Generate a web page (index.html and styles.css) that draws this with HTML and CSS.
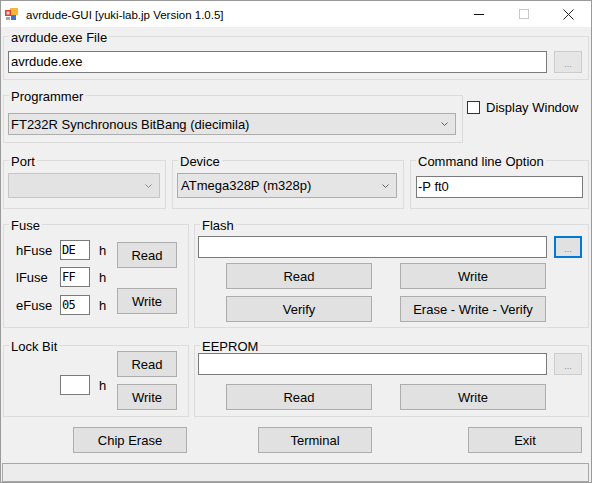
FILE: index.html
```html
<!DOCTYPE html>
<html>
<head>
<meta charset="utf-8">
<link rel="stylesheet" href="styles.css">
</head>
<body>
<div class="win">
  <div class="titlebar">
    <svg class="appicon" width="13" height="13" viewBox="0 0 13 13">
      <rect x="5" y="0" width="8" height="7" fill="#f4b73c"/>
      <rect x="0" y="2" width="6" height="6" fill="#e2402f"/>
      <rect x="1.5" y="3.5" width="3" height="3" fill="#f7d0c8"/>
      <rect x="6" y="7" width="5" height="5" fill="#3b74d6"/>
      <rect x="1" y="9" width="4" height="3" fill="#a8a8a8"/>
    </svg>
    <span class="title">avrdude-GUI [yuki-lab.jp Version 1.0.5]</span>
    <div class="ctrls">
      <div class="cbtn"><svg width="10" height="1" viewBox="0 0 10 1"><rect width="10" height="1" fill="#111"/></svg></div>
      <div class="cbtn"><svg width="10" height="10" viewBox="0 0 10 10"><rect x="0.5" y="0.5" width="9" height="9" fill="none" stroke="#c6c6c6"/></svg></div>
      <div class="cbtn"><svg width="11" height="11" viewBox="0 0 11 11"><path d="M0.5 0.5 L10.5 10.5 M10.5 0.5 L0.5 10.5" stroke="#222" stroke-width="1"/></svg></div>
    </div>
  </div>
  <div class="client">
    <div class="gb g-file">
      <div class="gl">avrdude.exe File</div>
      <div class="pathrow">
        <div class="tb tb-file">avrdude.exe</div>
        <div class="browse">...</div>
      </div>
    </div>

    <div class="prog-row">
      <div class="gb g-prog">
        <div class="gl">Programmer</div>
        <div class="cb cb-prog"><span>FT232R Synchronous BitBang (diecimila)</span><svg class="chev" width="7" height="4" viewBox="0 0 7 4"><polyline points="0.5,0.5 3.5,3.5 6.5,0.5" fill="none" stroke="#606060"/></svg></div>
      </div>
      <div class="chk"><span class="box"></span><span>Display Window</span></div>
    </div>

    <div class="row3">
      <div class="gb g-port">
        <div class="gl">Port</div>
        <div class="cb cb-port"><span></span><svg class="chev" width="7" height="4" viewBox="0 0 7 4"><polyline points="0.5,0.5 3.5,3.5 6.5,0.5" fill="none" stroke="#8a8a8a"/></svg></div>
      </div>
      <div class="gb g-dev">
        <div class="gl">Device</div>
        <div class="cb cb-dev"><span>ATmega328P (m328p)</span><svg class="chev" width="7" height="4" viewBox="0 0 7 4"><polyline points="0.5,0.5 3.5,3.5 6.5,0.5" fill="none" stroke="#606060"/></svg></div>
      </div>
      <div class="gb g-cmd">
        <div class="gl">Command line Option</div>
        <div class="tb tb-cmd">-P ft0</div>
      </div>
    </div>

    <div class="row4">
      <div class="gb g-fuse">
        <div class="gl">Fuse</div>
        <div class="fuse-body">
          <div class="fields">
            <div class="ff ff1"><span class="flbl">hFuse</span><span class="hex">DE</span><span class="unit">h</span></div>
            <div class="ff ff2"><span class="flbl">lFuse</span><span class="hex">FF</span><span class="unit">h</span></div>
            <div class="ff ff3"><span class="flbl">eFuse</span><span class="hex">05</span><span class="unit">h</span></div>
          </div>
          <div class="btncol">
            <div class="btn btn-s fuse-read">Read</div>
            <div class="btn btn-s fuse-write">Write</div>
          </div>
        </div>
      </div>
      <div class="gb g-flash">
        <div class="gl">Flash</div>
        <div class="pathrow flash-path">
          <div class="tb tb-flash"></div>
          <div class="browse focus">...</div>
        </div>
        <div class="btnrow first">
          <div class="btn btn-m">Read</div>
          <div class="btn btn-m">Write</div>
        </div>
        <div class="btnrow second">
          <div class="btn btn-m">Verify</div>
          <div class="btn btn-m">Erase - Write - Verify</div>
        </div>
      </div>
    </div>

    <div class="row5">
      <div class="gb g-lock">
        <div class="gl">Lock Bit</div>
        <div class="lock-body">
          <div class="ff lock-field"><span class="hex"></span><span class="unit">h</span></div>
          <div class="btncol">
            <div class="btn btn-s">Read</div>
            <div class="btn btn-s lock-write">Write</div>
          </div>
        </div>
      </div>
      <div class="gb g-eep">
        <div class="gl">EEPROM</div>
        <div class="pathrow eep-path">
          <div class="tb tb-flash"></div>
          <div class="browse">...</div>
        </div>
        <div class="btnrow eep-btns">
          <div class="btn btn-m">Read</div>
          <div class="btn btn-m">Write</div>
        </div>
      </div>
    </div>

    <div class="bottom">
      <div class="btn btn-l">Chip Erase</div>
      <div class="btn btn-l terminal">Terminal</div>
      <div class="btn btn-l exit">Exit</div>
    </div>

    <div class="status"></div>
  </div>
</div>
</body>
</html>
```

FILE: styles.css
```css
* { box-sizing: border-box; margin: 0; padding: 0; }
body {
  margin: 0;
  background: #ffffff;
  font-family: "Liberation Sans", Arial, sans-serif;
  font-size: 13px;
  color: #000;
}
.win {
  width: 592px;
  height: 483px;
  border: 1px solid #9a9a9a;
  display: flex;
  flex-direction: column;
  background: #f0f0f0;
}
.titlebar {
  height: 26px;
  flex: none;
  background: #ffffff;
  display: flex;
  align-items: center;
}
.appicon { margin-left: 4px; flex: none; }
.title {
  margin-left: 8px;
  font-size: 11.5px;
  color: #000;
  padding-top: 1px;
}
.ctrls { margin-left: auto; display: flex; height: 26px; }
.cbtn {
  width: 45px;
  height: 26px;
  display: flex;
  align-items: center;
  justify-content: center;
}
.cbtn svg { display: block; }

.client { flex: 1; padding-left: 2px; }

.gb { border: 1px solid #dcdcdc; }
.gl {
  margin: -7px 0 0 5px;
  padding: 0 2px;
  background: #f0f0f0;
  width: max-content;
  height: 16px;
  line-height: 15px;
}

.tb {
  background: #fff;
  border: 1px solid #7a7a7a;
  height: 22px;
  line-height: 20px;
  padding-left: 2px;
  white-space: nowrap;
}
.browse {
  width: 28px;
  height: 22px;
  border: 1px solid #cccccc;
  background: #e6e6e6;
  color: #8a8a8a;
  font-size: 9px;
  text-align: center;
  line-height: 24px;
  flex: none;
}
.browse.focus { border: 2px solid #0078d7; background: #e1e1e1; line-height: 22px; }

.pathrow { display: flex; gap: 7px; }

.g-file { margin-top: 9px; width: 586px; height: 44px; }
.g-file .pathrow { margin: 5px 0 0 4px; }
.tb-file { width: 539px; }

.prog-row { display: flex; align-items: flex-start; margin-top: 15px; }
.g-prog { width: 460px; height: 48px; }
.cb {
  height: 22px;
  border: 1px solid #adadad;
  background: #e5e5e5;
  display: flex;
  align-items: center;
  justify-content: space-between;
  padding-left: 2px;
  white-space: nowrap;
}
.chev { display: block; margin-right: 7px; flex: none; }
.cb-prog { margin: 8px 0 0 4px; width: 448px; }
.chk { display: flex; align-items: center; margin: 5px 0 0 4px; height: 15px; line-height: 15px; }
.box { width: 13px; height: 13px; border: 1px solid #333; background: #fff; margin-right: 6px; }

.row3 { display: flex; gap: 6px; margin-top: 17px; }
.g-port { width: 163px; height: 49px; }
.g-dev { width: 232px; height: 49px; }
.g-cmd { width: 179px; height: 49px; }
.cb-port { margin: 3px 0 0 4px; width: 152px; height: 25px; background: #e3e3e3; border-color: #c6c6c6; }
.cb-dev { margin: 3px 0 0 4px; width: 220px; height: 25px; padding-left: 3px; }
.tb-cmd { margin: 6px 0 0 5px; width: 167px; padding-left: 1px; }

.row4 { display: flex; gap: 5px; margin-top: 15px; }
.g-fuse { width: 186px; height: 104px; }
.g-flash { width: 395px; height: 104px; }
.fuse-body { display: flex; padding-left: 12px; }
.fields { display: flex; flex-direction: column; width: 101px; }
.ff { display: flex; align-items: center; height: 20px; }
.ff1 { margin-top: 6px; }
.ff2 { margin-top: 7px; }
.ff3 { margin-top: 8px; }
.flbl { width: 44px; }
.hex {
  width: 30px;
  height: 20px;
  border: 1px solid #7a7a7a;
  background: #fff;
  font-family: "DejaVu Sans Mono", "Liberation Mono", monospace;
  font-size: 12px;
  letter-spacing: -0.6px;
  line-height: 18px;
  padding-left: 1px;
}
.unit { width: 27px; padding-left: 9px; }
.btncol { display: flex; flex-direction: column; }
.btn {
  background: #e1e1e1;
  border: 1px solid #adadad;
  height: 26px;
  display: flex;
  align-items: center;
  justify-content: center;
  padding-top: 1px;
  white-space: nowrap;
}
.btn-s { width: 60px; }
.fuse-read { margin-top: 8px; }
.fuse-write { margin-top: 20px; }

.flash-path { margin: 2px 0 0 3px; }
.tb-flash { width: 349px; }
.btnrow { display: flex; gap: 28px; margin-left: 31px; }
.btn-m { width: 146px; }
.btnrow.first { margin-top: 5px; }
.btnrow.second { margin-top: 7px; }

.row5 { display: flex; gap: 5px; margin-top: 17px; }
.g-lock { width: 186px; height: 72px; }
.g-eep { width: 395px; height: 72px; }
.lock-body { display: flex; margin-top: -4px; padding-left: 56px; }
.lock-field { margin-top: 24px; width: 57px; }
.lock-write { margin-top: 7px; }
.eep-path { margin: -2px 0 0 3px; }
.eep-btns { margin-top: 9px; }

.bottom { display: flex; margin-top: 10px; padding-left: 70px; }
.btn-l { width: 114px; }
.terminal { margin-left: 71px; }
.exit { margin-left: 96px; }

.status {
  margin: 10px 0 0 -1px;
  width: 587px;
  height: 19px;
  border: 1px solid #a8a8a8;
  background: #ececec;
}
```
